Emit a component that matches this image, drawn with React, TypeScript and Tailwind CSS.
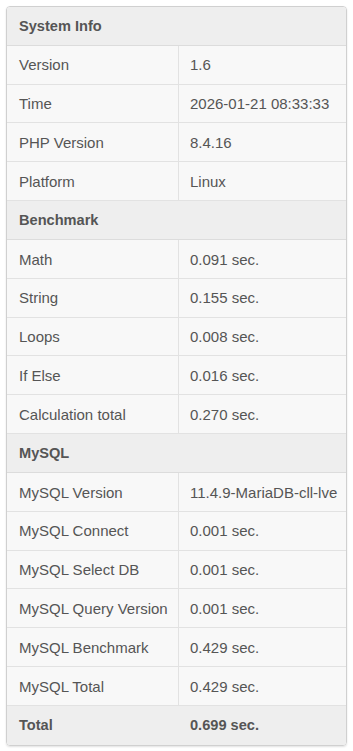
import React from "react";

type Row = { label: string; value?: string; kind?: "head" | "total" };

const rows: Row[] = [
  { label: "System Info", kind: "head" },
  { label: "Version", value: "1.6" },
  { label: "Time", value: "2026-01-21 08:33:33" },
  { label: "PHP Version", value: "8.4.16" },
  { label: "Platform", value: "Linux" },
  { label: "Benchmark", kind: "head" },
  { label: "Math", value: "0.091 sec." },
  { label: "String", value: "0.155 sec." },
  { label: "Loops", value: "0.008 sec." },
  { label: "If Else", value: "0.016 sec." },
  { label: "Calculation total", value: "0.270 sec." },
  { label: "MySQL", kind: "head" },
  { label: "MySQL Version", value: "11.4.9-MariaDB-cll-lve" },
  { label: "MySQL Connect", value: "0.001 sec." },
  { label: "MySQL Select DB", value: "0.001 sec." },
  { label: "MySQL Query Version", value: "0.001 sec." },
  { label: "MySQL Benchmark", value: "0.429 sec." },
  { label: "MySQL Total", value: "0.429 sec." },
  { label: "Total", value: "0.699 sec.", kind: "total" },
];

export default function App() {
  return (
    <div className="min-h-screen bg-white p-[6px] font-['Liberation_Sans',Arial,sans-serif] text-[15px] text-[#555]">
      <div className="w-[341px] overflow-hidden rounded-[4px] border border-[#d0d0d0] shadow-[0_1px_2px_rgba(0,0,0,0.12)]">
        {rows.map((r, i) => {
          const last = i === rows.length - 1;
          if (r.kind === "head") {
            return (
              <div
                key={r.label}
                className="flex h-[38.84px] items-center border-b border-[#dcdcdc] bg-[#eeeeee] px-3 pt-[2px] text-[14.6px] font-bold"
              >
                {r.label}
              </div>
            );
          }
          if (r.kind === "total") {
            return (
              <div key={r.label} className="flex h-[38.84px] items-center bg-[#eeeeee] pt-[2px] text-[14.6px] font-bold">
                <div className="w-[172px] shrink-0 px-3">{r.label}</div>
                <div className="px-[11px]">{r.value}</div>
              </div>
            );
          }
          return (
            <div
              key={r.label}
              className={`flex h-[38.84px] items-center whitespace-nowrap bg-[#f8f8f8] ${last ? "" : "border-b border-[#e2e2e2]"}`}
            >
              <div className="flex h-full w-[172px] shrink-0 items-center border-r border-[#e2e2e2] pl-3 pt-[2px]">{r.label}</div>
              <div className="pl-[11px] pt-[2px]">{r.value}</div>
            </div>
          );
        })}
      </div>
    </div>
  );
}
